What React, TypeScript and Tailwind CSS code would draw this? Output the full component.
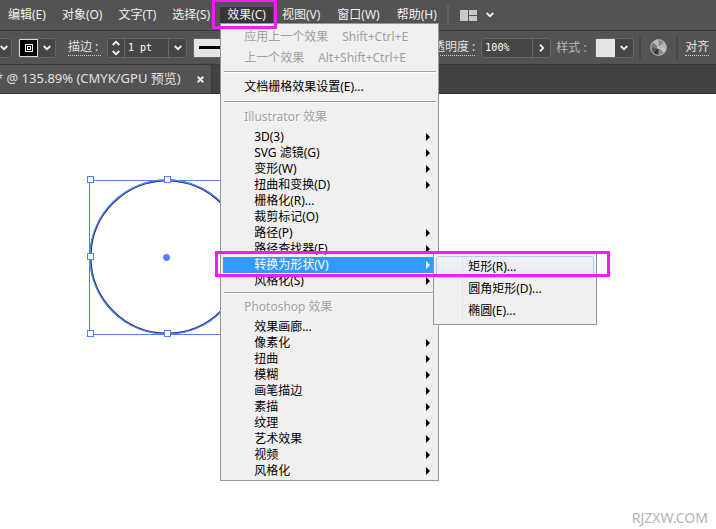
import React from 'react'

type Item = { label: string; sub?: boolean; active?: boolean }

const illustratorItems: Item[] = [
  { label: '3D(3)', sub: true },
  { label: 'SVG 滤镜(G)', sub: true },
  { label: '变形(W)', sub: true },
  { label: '扭曲和变换(D)', sub: true },
  { label: '栅格化(R)...' },
  { label: '裁剪标记(O)' },
  { label: '路径(P)', sub: true },
  { label: '路径查找器(F)', sub: true },
  { label: '转换为形状(V)', sub: true, active: true },
  { label: '风格化(S)', sub: true },
]

const photoshopItems: Item[] = [
  { label: '效果画廊...' },
  { label: '像素化', sub: true },
  { label: '扭曲', sub: true },
  { label: '模糊', sub: true },
  { label: '画笔描边', sub: true },
  { label: '素描', sub: true },
  { label: '纹理', sub: true },
  { label: '艺术效果', sub: true },
  { label: '视频', sub: true },
  { label: '风格化', sub: true },
]

const Chevron = ({ className = '' }: { className?: string }) => (
  <svg width="8" height="6" viewBox="0 0 8 6" className={className} fill="none" stroke="#f0f0f0" strokeWidth="1.8">
    <path d="M0.7 1 L4 4.2 L7.3 1" />
  </svg>
)

const MenuRow = ({ item }: { item: Item }) => (
  <button
    role="menuitem"
    className={`flex h-4 w-full items-center justify-between pr-[6px] pl-[31px] text-left ${item.active ? 'bg-[#3399ff] text-white' : 'text-black'}`}
  >
    <span>{item.label}</span>
    {item.sub && (
      <svg width="4" height="8" viewBox="0 0 4 8" fill="currentColor">
        <path d="M0 0 L4 4 L0 8 Z" />
      </svg>
    )}
  </button>
)

const Divider = ({ className = '' }: { className?: string }) => (
  <div role="separator" className={`ml-px h-[2px] border-t border-[#a0a0a0] bg-white ${className}`}></div>
)

const Submenu = () => (
  <div role="menu" className="absolute top-[229px] left-[212px] w-[164px] border border-[#979797] bg-[#f0f0f0] p-[2px] text-black">
    {['矩形(R)...', '圆角矩形(D)...', '椭圆(E)...'].map((label, i) => (
      <button
        key={label}
        role="menuitem"
        className={`flex h-[22px] w-full items-center rounded-[3px] border text-left ${i === 0 ? 'border-[#aecff7] bg-gradient-to-b from-[#f0f1f3] to-[#e6ecf4]' : 'border-transparent'}`}
      >
        <span className="ml-[25px] flex h-full items-center border-l border-[#e3e3e3] pl-[5px]">{label}</span>
      </button>
    ))}
  </div>
)

const EffectMenu = () => (
  <div role="menu" className="absolute top-full left-0 z-10 w-[219px] border border-[#979797] bg-[#f0f0f0] px-[2px] pt-[2px] text-black">
    <div className="text-[#a0a0a0] [text-shadow:1px_1px_0_#fff]">
      <button role="menuitem" disabled className="flex h-[21px] w-full items-center gap-[14px] pl-[21px]">
        <span>应用上一个效果</span>
        <span>Shift+Ctrl+E</span>
      </button>
      <button role="menuitem" disabled className="flex h-[21px] w-full items-center gap-[14px] pl-[21px]">
        <span>上一个效果</span>
        <span>Alt+Shift+Ctrl+E</span>
      </button>
    </div>
    <Divider className="mt-[3px]" />
    <button role="menuitem" className="flex h-[28px] w-full items-center pl-[21px]">文档栅格效果设置(E)...</button>
    <Divider />
    <p className="flex h-[26px] items-center pt-px pl-[21px] text-[#a0a0a0] [text-shadow:1px_1px_0_#fff]">Illustrator 效果</p>
    {illustratorItems.map((item) => (
      <MenuRow key={item.label} item={item} />
    ))}
    <Divider className="mt-[3px]" />
    <p className="flex h-[25px] items-center pl-[21px] text-[#a0a0a0] [text-shadow:1px_1px_0_#fff]">Photoshop 效果</p>
    {photoshopItems.map((item) => (
      <MenuRow key={item.label} item={item} />
    ))}
    <div className="h-px"></div>
    <Submenu />
    <div className="pointer-events-none absolute top-[227px] -left-[6px] h-[26px] w-[395px] border-3 border-[#f21df2]"></div>
  </div>
)

const MenuBar = () => (
  <header className="flex h-[31px] items-center border-b border-[#383838] text-[#f0f0f0]">
    <nav className="flex items-center">
      {['编辑(E)', '对象(O)', '文字(T)', '选择(S)'].map((label) => (
        <button key={label} className="h-4 px-2 leading-4">{label}</button>
      ))}
      <div className="relative ml-[2px]">
        <button aria-expanded="true" className="block h-4 rounded-t-[2px] bg-[#363636] px-[7px] leading-4">效果(C)</button>
        <EffectMenu />
        <div className="pointer-events-none absolute -top-[8px] -left-[8px] z-20 h-[30px] w-[65px] border-3 border-[#f21df2]"></div>
      </div>
      {['视图(V)', '窗口(W)', '帮助(H)'].map((label) => (
        <button key={label} className="ml-px h-4 px-2 leading-4">{label}</button>
      ))}
    </nav>
    <div className="ml-[2px] h-5 w-[2px] bg-[#636363]"></div>
    <button aria-label="排列文档" className="ml-[11px] flex items-center gap-[9px]">
      <svg width="17" height="11" viewBox="0 0 17 11" fill="#c8c8c8">
        <path d="M0 0h8v11h-8z M9 0h8v5h-8z M9 6h8v5h-8z" />
      </svg>
      <Chevron />
    </button>
  </header>
)

const ControlBar = () => (
  <div className="flex h-[34px] items-center border-b border-[#383838] text-[#e0e0e0]">
    <button aria-label="填色" className="flex h-5 w-3 shrink-0 items-center rounded-r-[3px] border border-l-0 border-[#666] bg-[#464646]">
      <Chevron />
    </button>
    <div className="ml-[6px] flex h-5 w-[38px] shrink-0 overflow-hidden rounded-[2px] border border-[#666] bg-[#464646]">
      <button aria-label="描边颜色" className="flex w-[19px] items-center justify-center border border-[#d8d8d8] bg-black">
        <svg width="8" height="8" viewBox="0 0 8 8" fill="none" stroke="#fff">
          <rect x="0.5" y="0.5" width="7" height="7" />
          <rect x="2.5" y="2.5" width="3" height="3" />
        </svg>
      </button>
      <button aria-label="描边选项" className="flex flex-1 items-center justify-center">
        <Chevron />
      </button>
    </div>
    <label htmlFor="stroke" className="ml-3 w-[33px] shrink-0 border-b border-dotted border-[#d0d0d0] leading-4 whitespace-nowrap">描边 :</label>
    <div className="ml-[6px] flex h-5 w-20 shrink-0 rounded-[3px] border border-[#666] bg-[#464646]">
      <div className="flex w-[17px] flex-col items-center justify-center gap-1 border-r border-[#666]">
        <button aria-label="增加"><Chevron className="block rotate-180" /></button>
        <button aria-label="减少"><Chevron className="block" /></button>
      </div>
      <input id="stroke" defaultValue="1 pt" className="w-11 border-r border-[#666] pl-[3px] font-['DejaVu_Sans_Mono',monospace] text-[10px] text-white outline-none" />
      <button aria-label="描边粗细" className="flex flex-1 items-center justify-center"><Chevron /></button>
    </div>
    <button aria-label="画笔定义" className="ml-[6px] flex h-5 w-[110px] shrink-0 items-center border border-[#666] bg-[#e4e4e4] pl-[5px]">
      <span className="h-[3px] w-full bg-black"></span>
    </button>
    <div className="flex flex-1 items-center">
      <label htmlFor="opacity" className="ml-[118px] border-b border-dotted border-[#d0d0d0] leading-4 whitespace-nowrap">不透明度 :</label>
      <div className="ml-[6px] flex h-5 w-[70px] shrink-0 rounded-[3px] border border-[#666] bg-[#464646]">
        <input id="opacity" defaultValue="100%" className="w-[51px] border-r border-[#666] pl-[3px] font-['DejaVu_Sans_Mono',monospace] text-[10px] text-white outline-none" />
        <button aria-label="不透明度选项" className="flex flex-1 items-center justify-center"><Chevron className="-rotate-90" /></button>
      </div>
      <span className="ml-[5px] w-[33px] shrink-0 whitespace-nowrap text-[#b8b8b8]">样式 :</span>
      <div className="ml-[6px] flex h-5 w-[39px] shrink-0 rounded-[3px] border border-[#666] bg-[#464646]">
        <button aria-label="图形样式" className="w-[19px] bg-[#e4e4e4]"></button>
        <button aria-label="样式选项" className="flex flex-1 items-center justify-center"><Chevron /></button>
      </div>
      <div className="ml-[5px] h-6 w-[2px] bg-[#474747]"></div>
      <button aria-label="重新着色图稿" className="ml-[9px]">
        <svg width="17" height="17" viewBox="0 0 17 17" className="block">
          <circle cx="8.5" cy="8.5" r="8" fill="#9b9b9b" />
          <path d="M8.5 8.5 L8.5 1 A7.5 7.5 0 0 1 13.8 3.2 Z" fill="#8a8a8a" />
          <path d="M8.5 8.5 L13.8 3.2 A7.5 7.5 0 0 1 16 8.5 Z" fill="#b5b5b5" />
          <path d="M8.5 8.5 L16 8.5 A7.5 7.5 0 0 1 13.8 13.8 Z" fill="#c6c6c6" />
          <path d="M8.5 8.5 L13.8 13.8 A7.5 7.5 0 0 1 8.5 16 Z" fill="#8c8c8c" />
          <path d="M8.5 8.5 L8.5 16 A7.5 7.5 0 0 1 3.2 13.8 Z" fill="#303030" />
          <path d="M8.5 8.5 L3.2 13.8 A7.5 7.5 0 0 1 1 8.5 Z" fill="#555" />
          <path d="M8.5 8.5 L1 8.5 A7.5 7.5 0 0 1 3.2 3.2 Z" fill="#777" />
          <path d="M8.5 8.5 L3.2 3.2 A7.5 7.5 0 0 1 8.5 1 Z" fill="#bdbdbd" />
          <circle cx="8.5" cy="8.5" r="7.8" fill="none" stroke="#b8b8b8" />
          <circle cx="8.5" cy="8.5" r="1.5" fill="#c8c8c8" />
        </svg>
      </button>
      <div className="ml-[9px] h-6 w-[2px] bg-[#474747]"></div>
      <button className="ml-[7px] border-b border-dotted border-[#d0d0d0] leading-4 whitespace-nowrap">对齐</button>
    </div>
  </div>
)

const Artwork = () => (
  <svg width="164" height="164" viewBox="0 0 164 164" className="absolute top-[81px] left-[85px]" fill="none">
    <circle cx="82" cy="82" r="76.5" stroke="#1c2440" strokeWidth="2" />
    <circle cx="82" cy="82" r="77" stroke="#4f80ff" strokeWidth="1.4" />
    <rect x="4.5" y="5.5" width="154" height="154" stroke="#4f80ff" />
    <g fill="#fff" stroke="#4f80ff">
      <rect x="2.5" y="1.5" width="6" height="6" />
      <rect x="79.5" y="1.5" width="6" height="6" />
      <rect x="2.5" y="78.5" width="6" height="6" />
      <rect x="2.5" y="155.5" width="6" height="6" />
      <rect x="79.5" y="155.5" width="6" height="6" />
    </g>
    <circle cx="81.5" cy="82.5" r="3.4" fill="#4f80ff" />
  </svg>
)

const App = () => {
  return (
    <div className="flex min-h-screen flex-col overflow-hidden bg-[#535353] font-['Noto_Sans','Noto_Sans_CJK_SC',sans-serif] text-xs">
      <MenuBar />
      <ControlBar />
      <div className="flex h-[29px] border-b border-[#333] bg-[#424242]">
        <div className="flex w-[212px] items-center justify-between border-r border-[#383838] bg-[#535353] pr-[7px] text-[#e0e0e0]">
          <span className="-ml-1 text-[13px] whitespace-nowrap">* @ 135.89% (CMYK/GPU 预览)</span>
          <button aria-label="关闭">
            <svg width="7" height="7" viewBox="0 0 7 7" stroke="#e6e6e6" strokeWidth="2">
              <path d="M0.7 0.7 L6.3 6.3 M6.3 0.7 L0.7 6.3" />
            </svg>
          </button>
        </div>
      </div>
      <main className="relative flex flex-1 items-end justify-end bg-white pr-2 pb-px">
        <Artwork />
        <p className="text-sm text-[#b4b4b4]">RJZXW.COM</p>
      </main>
    </div>
  )
}

export default App
